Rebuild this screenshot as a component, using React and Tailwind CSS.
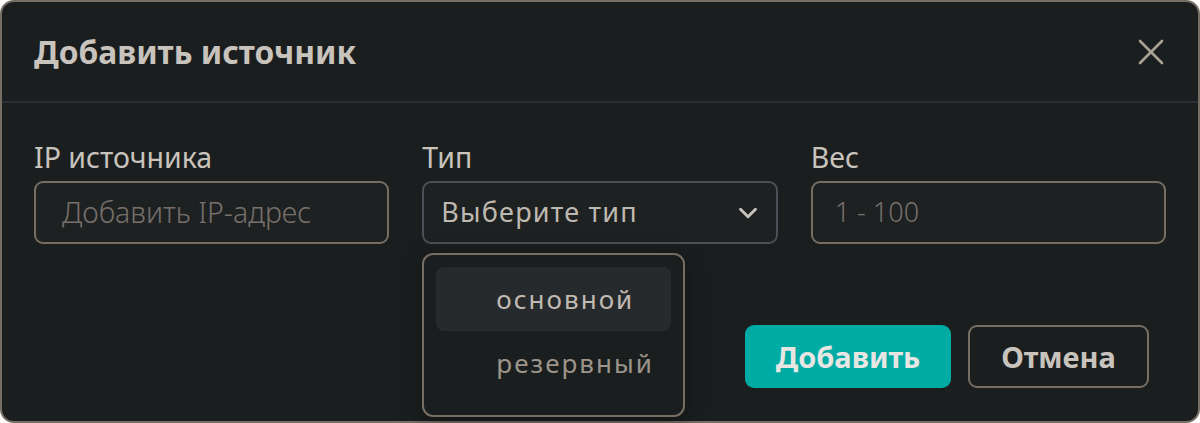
import React from 'react';
import { ChevronDown } from 'lucide-react';

export default function App() {
  return (
    <div className="h-[423px] w-[1200px] bg-white" style={{ fontFamily: '"Noto Sans", "Open Sans", sans-serif' }}>
      <div className="relative flex h-full flex-col rounded-[14px] border-2 border-[#776e63] bg-[#1b1e1f]">
        <div className="flex h-[101px] items-center justify-between border-b-2 border-[#2a2e30] pl-[32px] pr-[34px]">
          <div className="text-[31.8px] font-bold text-[#c8c3bc]">Добавить источник</div>
          <svg width="26" height="26" viewBox="0 0 26 26" className="text-[#a8a196]">
            <path d="M2 2 24 24M24 2 2 24" stroke="currentColor" strokeWidth="2.6" strokeLinecap="round" />
          </svg>
        </div>

        <div className="grid grid-cols-3 gap-[33px] px-[32px] pt-[36px]">
          <div className="flex flex-col gap-[6px]">
            <label className="text-[28.5px] leading-[36px] text-[#c8c3bc]">IP источника</label>
            <div className="flex h-[63px] items-center rounded-[9px] border-2 border-[#776e63] bg-[#1e2122] px-[26px] text-[28.5px] font-light text-[#77706a]">
              Добавить IP-адрес
            </div>
          </div>

          <div className="relative flex flex-col gap-[6px]">
            <label className="text-[28.5px] leading-[36px] text-[#c8c3bc]">Тип</label>
            <div className="flex h-[63px] items-center justify-between rounded-[9px] border-2 border-[#4a5055] bg-[#1e2122] pl-[17px] pr-[13px] text-[27px] tracking-[1.2px] text-[#beb9b0]">
              <span>Выберите тип</span>
              <ChevronDown size={30} strokeWidth={2.3} className="text-[#c8c3bc]" />
            </div>

            <div className="absolute left-0 top-[114px] w-[263px] rounded-[11px] border-2 border-[#776e63] bg-[#1b1e1f] px-[12px] pb-[20px] pt-[12px] shadow-[0_6px_24px_rgba(0,0,0,0.35)]">
              <div className="flex h-[64px] items-center rounded-[8px] bg-[#272a2d] pl-[60px] text-[26px] tracking-[2px] text-[#c0bab2]">
                основной
              </div>
              <div className="flex h-[64px] items-center pl-[60px] text-[26px] tracking-[2px] text-[#9c958b]">
                резервный
              </div>
            </div>
          </div>

          <div className="flex flex-col gap-[6px]">
            <label className="text-[28.5px] leading-[36px] text-[#c8c3bc]">Вес</label>
            <div className="flex h-[63px] items-center rounded-[9px] border-2 border-[#776e63] bg-[#1e2122] px-[22px] text-[27px] font-light text-[#77706a]">
              1 - 100
            </div>
          </div>
        </div>

        <div className="flex justify-end gap-[17px] pr-[49px] pt-[81px]">
          <button className="flex h-[63px] w-[206px] items-center justify-center rounded-[9px] bg-[#00aba3] text-[29px] font-bold text-[#e8e6e3]">
            Добавить
          </button>
          <button className="flex h-[63px] w-[181px] items-center justify-center rounded-[9px] border-2 border-[#776e63] bg-[#1b1e1f] text-[29px] font-bold text-[#c8c3bc]">
            Отмена
          </button>
        </div>
      </div>
    </div>
  );
}
